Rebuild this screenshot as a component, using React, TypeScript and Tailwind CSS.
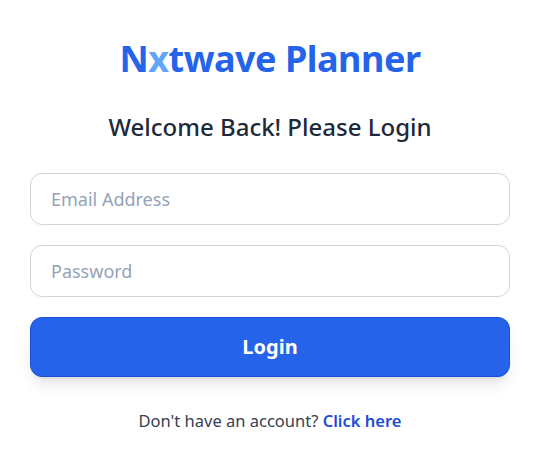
import React from "react";

const App = () => {
  return (
    <div className="min-h-screen w-full bg-white flex flex-col items-center font-['Segoe_UI','Noto_Sans',sans-serif]">
      <div className="w-full max-w-[540px] px-[30px] pt-[37px] flex flex-col items-center">
        <h1 className="text-[36px] leading-[44px] font-bold text-[#2563eb] tracking-[-0.5px]">
          N<span className="text-[#60a5fa]">x</span>twave Planner
        </h1>
        <h2 className="mt-[30px] text-[24px] leading-[32px] font-medium text-[#1e293b]">
          Welcome Back! Please Login
        </h2>
        <form className="w-full mt-[30px] flex flex-col gap-[20px]" onSubmit={(e) => e.preventDefault()}>
          <input
            type="email"
            placeholder="Email Address"
            className="w-full h-[52px] px-5 rounded-xl border border-[#d1d5db] text-[18px] text-[#1e293b] placeholder:text-[#94a3b8] outline-none"
          />
          <input
            type="password"
            placeholder="Password"
            className="w-full h-[52px] px-5 rounded-xl border border-[#d1d5db] text-[18px] text-[#1e293b] placeholder:text-[#94a3b8] outline-none"
          />
          <button
            type="submit"
            className="w-full h-[60px] rounded-xl bg-[#2563eb] border border-[#1d4ed8] text-white text-[20px] font-bold shadow-lg"
          >
            Login
          </button>
        </form>
        <p className="mt-[32px] text-[16.5px] text-[#374151]">
          Don't have an account?{" "}
          <a href="#" className="text-[#1d4ed8] font-semibold">
            Click here
          </a>
        </p>
      </div>
    </div>
  );
};

export default App;
